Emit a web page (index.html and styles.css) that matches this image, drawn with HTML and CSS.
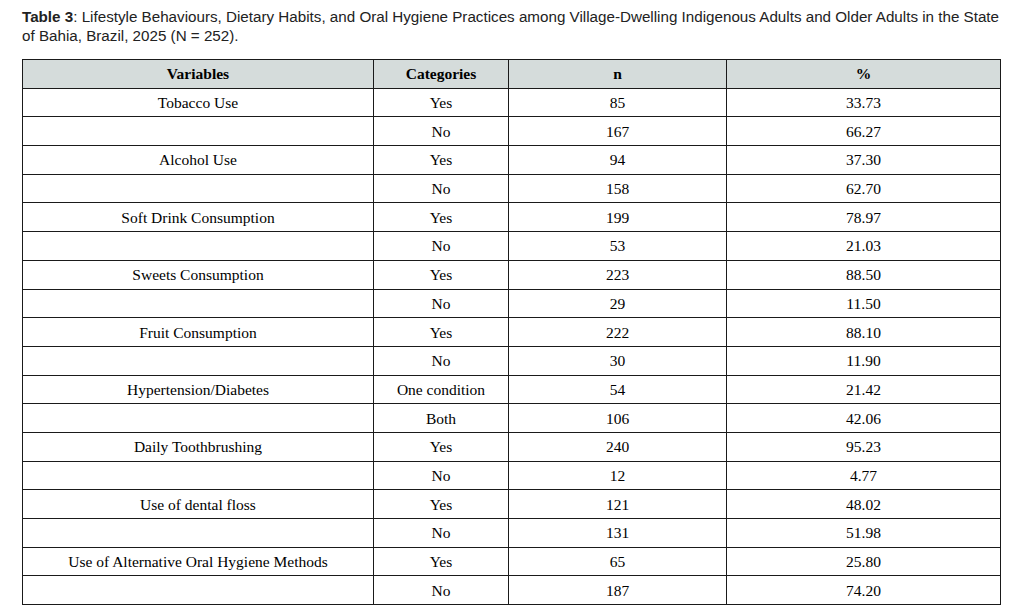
FILE: index.html
```html
<!DOCTYPE html>
<html lang="en">
<head>
<meta charset="utf-8">
<title>Table 3</title>
<link rel="stylesheet" href="styles.css">
</head>
<body>
<main class="page">
  <p class="caption"><strong>Table 3</strong>: Lifestyle Behaviours, Dietary Habits, and Oral Hygiene Practices among Village-Dwelling Indigenous Adults and Older Adults in the State of Bahia, Brazil, 2025 (N = 252).</p>
  <table class="data">
    <colgroup>
      <col class="c-var">
      <col class="c-cat">
      <col class="c-n">
      <col class="c-pct">
    </colgroup>
    <thead>
      <tr><th>Variables</th><th>Categories</th><th>n</th><th>%</th></tr>
    </thead>
    <tbody>
      <tr><td>Tobacco Use</td><td>Yes</td><td>85</td><td>33.73</td></tr>
      <tr><td></td><td>No</td><td>167</td><td>66.27</td></tr>
      <tr><td>Alcohol Use</td><td>Yes</td><td>94</td><td>37.30</td></tr>
      <tr><td></td><td>No</td><td>158</td><td>62.70</td></tr>
      <tr><td>Soft Drink Consumption</td><td>Yes</td><td>199</td><td>78.97</td></tr>
      <tr><td></td><td>No</td><td>53</td><td>21.03</td></tr>
      <tr><td>Sweets Consumption</td><td>Yes</td><td>223</td><td>88.50</td></tr>
      <tr><td></td><td>No</td><td>29</td><td>11.50</td></tr>
      <tr><td>Fruit Consumption</td><td>Yes</td><td>222</td><td>88.10</td></tr>
      <tr><td></td><td>No</td><td>30</td><td>11.90</td></tr>
      <tr><td>Hypertension/Diabetes</td><td>One condition</td><td>54</td><td>21.42</td></tr>
      <tr><td></td><td>Both</td><td>106</td><td>42.06</td></tr>
      <tr><td>Daily Toothbrushing</td><td>Yes</td><td>240</td><td>95.23</td></tr>
      <tr><td></td><td>No</td><td>12</td><td>4.77</td></tr>
      <tr><td>Use of dental floss</td><td>Yes</td><td>121</td><td>48.02</td></tr>
      <tr><td></td><td>No</td><td>131</td><td>51.98</td></tr>
      <tr><td>Use of Alternative Oral Hygiene Methods</td><td>Yes</td><td>65</td><td>25.80</td></tr>
      <tr><td></td><td>No</td><td>187</td><td>74.20</td></tr>
    </tbody>
  </table>
</main>
</body>
</html>
```

FILE: styles.css
```css
html, body {
  margin: 0;
  padding: 0;
  background: #ffffff;
}

.page {
  padding: 7px 31px 0 22px;
}

.caption {
  margin: 0 0 14px 0;
  font-family: "Liberation Sans", Arial, sans-serif;
  font-size: 15.2px;
  line-height: 19px;
  color: #222222;
}

.caption strong {
  font-weight: bold;
}

.data {
  width: 978px;
  border-collapse: collapse;
  table-layout: fixed;
  font-family: "Liberation Serif", "Times New Roman", serif;
  font-size: 15.5px;
  color: #000000;
}

.c-var { width: 351px; }
.c-cat { width: 135px; }
.c-n { width: 218px; }
.c-pct { width: 274px; }

.data th,
.data td {
  border: 1px solid #1a1a1a;
  padding: 1px 4px 0 4px;
  height: 26.7px;
  text-align: center;
  vertical-align: middle;
  white-space: nowrap;
}

.data th {
  background: #d5dcdb;
  font-weight: bold;
}
```
